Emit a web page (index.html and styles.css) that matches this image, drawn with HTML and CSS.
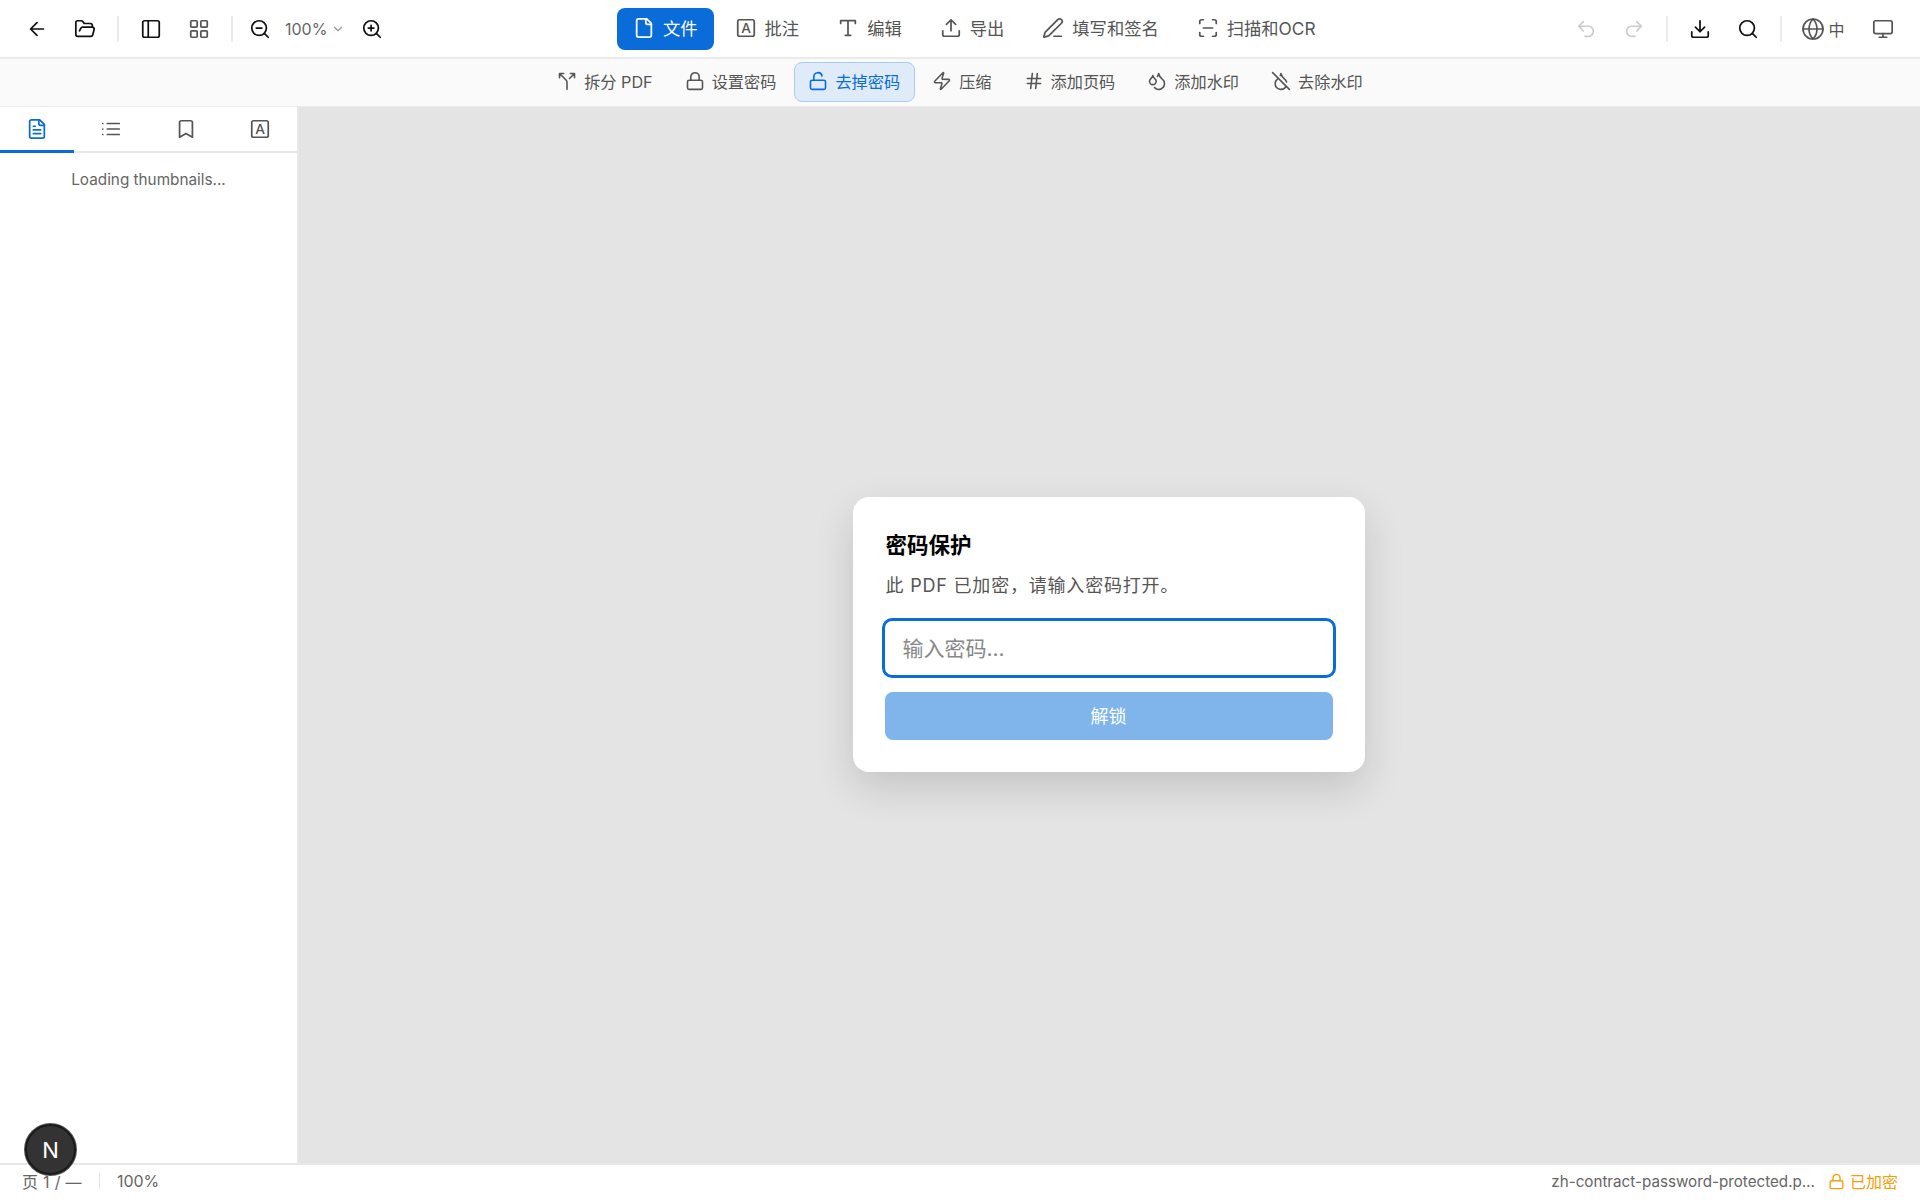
FILE: index.html
```html
<!DOCTYPE html>
<html lang="zh">
<head>
<meta charset="utf-8">
<title>PDF</title>
<link rel="stylesheet" href="styles.css">
</head>
<body>
<div class="app">
  <header class="topbar">
    <div class="group left">
      <button class="ib dark"><svg class="ic" viewBox="0 0 24 24"><path d="M19 12H5M12 19l-7-7 7-7"/></svg></button>
      <button class="ib dark"><svg class="ic" viewBox="0 0 24 24"><path d="m6 14 1.5-2.9A2 2 0 0 1 9.24 10H20a2 2 0 0 1 1.94 2.5l-1.54 6a2 2 0 0 1-1.95 1.5H4a2 2 0 0 1-2-2V5a2 2 0 0 1 2-2h3.9a2 2 0 0 1 1.69.9l.81 1.2a2 2 0 0 0 1.67.9H18a2 2 0 0 1 2 2v2"/></svg></button>
      <span class="sep"></span>
      <button class="ib dark"><svg class="ic" viewBox="0 0 24 24"><rect x="3" y="3" width="18" height="18" rx="2"/><path d="M9 3v18"/></svg></button>
      <button class="ib gray"><svg class="ic" viewBox="0 0 24 24"><rect x="3" y="3" width="7" height="7" rx="1"/><rect x="14" y="3" width="7" height="7" rx="1"/><rect x="14" y="14" width="7" height="7" rx="1"/><rect x="3" y="14" width="7" height="7" rx="1"/></svg></button>
      <span class="sep"></span>
      <button class="ib dark zo"><svg class="ic" viewBox="0 0 24 24"><circle cx="11" cy="11" r="8"/><path d="m21 21-4.3-4.3M8 11h6"/></svg></button>
      <span class="zoom">100%<svg class="chev" viewBox="0 0 24 24"><path d="m6 9 6 6 6-6"/></svg></span>
      <button class="ib dark zi"><svg class="ic" viewBox="0 0 24 24"><circle cx="11" cy="11" r="8"/><path d="m21 21-4.3-4.3M11 8v6M8 11h6"/></svg></button>
    </div>
    <nav class="tabs">
      <button class="tab active"><svg class="ic" viewBox="0 0 24 24"><path d="M15 2H6a2 2 0 0 0-2 2v16a2 2 0 0 0 2 2h12a2 2 0 0 0 2-2V7Z"/><path d="M14 2v4a2 2 0 0 0 2 2h4"/></svg>文件</button>
      <button class="tab"><svg class="ic" viewBox="0 0 24 24"><rect x="3" y="3" width="18" height="18" rx="2"/><text class="ic-a" x="12" y="17">A</text></svg>批注</button>
      <button class="tab"><svg class="ic" viewBox="0 0 24 24"><path d="M4 7V4h16v3M9 20h6M12 4v16"/></svg>编辑</button>
      <button class="tab"><svg class="ic" viewBox="0 0 24 24"><path d="M21 15v4a2 2 0 0 1-2 2H5a2 2 0 0 1-2-2v-4M17 8l-5-5-5 5M12 3v12"/></svg>导出</button>
      <button class="tab"><svg class="ic" viewBox="0 0 24 24"><path d="M13 21h8"/><path d="M21.174 6.812a1 1 0 0 0-3.986-3.987L3.842 16.174a2 2 0 0 0-.5.83l-1.321 4.352a.5.5 0 0 0 .623.622l4.353-1.32a2 2 0 0 0 .83-.497z"/></svg>填写和签名</button>
      <button class="tab"><svg class="ic" viewBox="0 0 24 24"><path d="M3 7V5a2 2 0 0 1 2-2h2M17 3h2a2 2 0 0 1 2 2v2M21 17v2a2 2 0 0 1-2 2h-2M7 21H5a2 2 0 0 1-2-2v-2M7 12h10"/></svg>扫描和OCR</button>
    </nav>
    <div class="group right">
      <button class="ib faint"><svg class="ic" viewBox="0 0 24 24"><path d="M9 14 4 9l5-5"/><path d="M4 9h10.5a5.5 5.5 0 0 1 5.5 5.5a5.5 5.5 0 0 1-5.5 5.5H11"/></svg></button>
      <button class="ib faint"><svg class="ic" viewBox="0 0 24 24"><path d="m15 14 5-5-5-5"/><path d="M20 9H9.5A5.5 5.5 0 0 0 4 14.5A5.5 5.5 0 0 0 9.5 20H13"/></svg></button>
      <span class="sep"></span>
      <button class="ib dark"><svg class="ic" viewBox="0 0 24 24"><path d="M21 15v4a2 2 0 0 1-2 2H5a2 2 0 0 1-2-2v-4M7 10l5 5 5-5M12 15V3"/></svg></button>
      <button class="ib dark"><svg class="ic" viewBox="0 0 24 24"><circle cx="11" cy="11" r="8"/><path d="m21 21-4.3-4.3"/></svg></button>
      <span class="sep"></span>
      <span class="lang"><svg class="ic" viewBox="0 0 24 24"><circle cx="12" cy="12" r="10"/><path d="M12 2a14.5 14.5 0 0 0 0 20 14.5 14.5 0 0 0 0-20M2 12h20"/></svg>中</span>
      <button class="ib gray mon"><svg class="ic" viewBox="0 0 24 24"><rect x="2" y="3" width="20" height="14" rx="2"/><path d="M8 21h8M12 17v4"/></svg></button>
    </div>
  </header>

  <div class="subbar">
    <button class="sub"><svg class="ic" viewBox="0 0 24 24"><path d="M16 3h5v5M8 3H3v5M12 22v-8.3a4 4 0 0 0-1.172-2.872L3 3M15 9l6-6"/></svg>拆分 PDF</button>
    <button class="sub"><svg class="ic" viewBox="0 0 24 24"><rect x="3" y="11" width="18" height="11" rx="2"/><path d="M7 11V7a5 5 0 0 1 10 0v4"/></svg>设置密码</button>
    <button class="sub on"><svg class="ic" viewBox="0 0 24 24"><rect x="3" y="11" width="18" height="11" rx="2"/><path d="M7 11V7a5 5 0 0 1 9.9-1"/></svg>去掉密码</button>
    <button class="sub"><svg class="ic" viewBox="0 0 24 24"><path d="M4 14a1 1 0 0 1-.78-1.63l9.9-10.2a.5.5 0 0 1 .86.46l-1.92 6.02A1 1 0 0 0 13 10h7a1 1 0 0 1 .78 1.63l-9.9 10.2a.5.5 0 0 1-.86-.46l1.92-6.02A1 1 0 0 0 11 14z"/></svg>压缩</button>
    <button class="sub"><svg class="ic" viewBox="0 0 24 24"><path d="M4 9h16M4 15h16M10 3 8 21M16 3l-2 18"/></svg>添加页码</button>
    <button class="sub"><svg class="ic" viewBox="0 0 24 24"><path d="M7 16.3c2.2 0 4-1.83 4-4.05 0-1.16-.57-2.26-1.71-3.19S7.29 6.75 7 5.3c-.29 1.45-1.14 2.84-2.29 3.76S3 11.1 3 12.25c0 2.22 1.8 4.05 4 4.05z"/><path d="M12.56 6.6A10.97 10.97 0 0 0 14 3.02c.5 2.5 2 4.9 4 6.5s3 3.5 3 5.5a6.98 6.98 0 0 1-11.91 4.97"/></svg>添加水印</button>
    <button class="sub"><svg class="ic" viewBox="0 0 24 24"><path d="M18.715 13.186C18.29 11.858 17.384 10.607 16 9.5c-2-1.6-3.5-4-4-6.5a10.7 10.7 0 0 1-.884 2.586M2 2l20 20M8.795 8.797A11 11 0 0 1 8 9.5C6 11.1 5 13 5 15a7 7 0 0 0 13.222 3.208"/></svg>去除水印</button>
  </div>

  <div class="main">
    <aside class="side">
      <div class="stabs">
        <button class="stab on"><svg class="ic" viewBox="0 0 24 24"><path d="M15 2H6a2 2 0 0 0-2 2v16a2 2 0 0 0 2 2h12a2 2 0 0 0 2-2V7Z"/><path d="M14 2v4a2 2 0 0 0 2 2h4M10 9H8M16 13H8M16 17H8"/></svg></button>
        <button class="stab"><svg class="ic" viewBox="0 0 24 24"><path d="M3 12h.01M3 18h.01M3 6h.01M8 12h13M8 18h13M8 6h13"/></svg></button>
        <button class="stab"><svg class="ic" viewBox="0 0 24 24"><path d="m19 21-7-4-7 4V5a2 2 0 0 1 2-2h10a2 2 0 0 1 2 2v16z"/></svg></button>
        <button class="stab"><svg class="ic" viewBox="0 0 24 24"><rect x="3" y="3" width="18" height="18" rx="2"/><text class="ic-a" x="12" y="17">A</text></svg></button>
      </div>
      <p class="loading">Loading thumbnails...</p>
    </aside>
    <main class="canvas">
      <form class="dialog">
        <h2>密码保护</h2>
        <p>此 PDF 已加密，请输入密码打开。</p>
        <input class="pw" type="password" placeholder="输入密码...">
        <button class="unlock" type="button">解锁</button>
      </form>
    </main>
  </div>

  <footer class="status">
    <span class="pg">页 1 / —</span>
    <span class="ssep"></span>
    <span>100%</span>
    <span class="fname">zh-contract-password-protected.p…</span>
    <span class="enc"><svg class="ic" viewBox="0 0 24 24"><rect x="3" y="11" width="18" height="11" rx="2"/><path d="M7 11V7a5 5 0 0 1 10 0v4"/></svg>已加密</span>
  </footer>
  <div class="next">N</div>
</div>
</body>
</html>
```
FILE: styles.css
```css
* { box-sizing: border-box; }
html, body { margin: 0; height: 100%; }
body {
  font-family: Inter, "Noto Sans CJK SC", sans-serif;
  color: #555;
  background: #fff;
}
button { font: inherit; color: inherit; background: none; border: 0; padding: 0; }
.app { position: relative; height: 1200px; display: flex; flex-direction: column; overflow: hidden; }
.ic { width: 22px; height: 22px; fill: none; stroke: currentColor; stroke-width: 1.9; stroke-linecap: round; stroke-linejoin: round; flex: none; display: block; }
.ic-a { font: 500 15px Inter, sans-serif; fill: currentColor; stroke: none; text-anchor: middle; }

.topbar { height: 59px; flex: none; display: flex; align-items: center; border-bottom: 2px solid #ebebeb; }
.group { display: flex; align-items: center; }
.left { width: 617px; padding-left: 13px; flex: none; }
.right { margin-left: auto; padding-right: 13px; }
.ib { width: 38px; height: 38px; display: flex; align-items: center; justify-content: center; margin: 0 5px; }
.dark { color: #111; }
.gray { color: #555; }
.faint { color: #ccc; }
.sep { width: 2px; height: 26px; background: #ebebeb; margin: 0 8px; flex: none; }
.zo { margin-right: 0; margin-left: 0; }
.zoom { font-size: 16px; color: #666; display: flex; align-items: center; width: 68px; padding-left: 6px; }
.chev { width: 14px; height: 14px; margin-left: 4px; fill: none; stroke: #999; stroke-width: 2; stroke-linecap: round; stroke-linejoin: round; }
.zi { margin-left: 6px; }
.tabs { display: flex; align-items: center; gap: 4px; }
.tab { height: 42px; display: flex; align-items: center; gap: 8px; padding: 0 17px 2px; font-size: 17.3px; border-radius: 8px; color: #555; }
.tab.active { background: #0a6cd8; color: #fff; padding: 0 16px 2px; }
.lang { display: flex; align-items: center; gap: 3.5px; font-size: 16px; margin-left: 11px; width: 61px; color: #555; }
.lang .ic { width: 24px; height: 24px; stroke-width: 1.7; }
.mon { margin-left: 2px; }

.subbar { height: 47px; flex: none; display: flex; align-items: center; justify-content: center; gap: 3px; padding-bottom: 2px; background: #fafafa; }
.sub { height: 40px; display: flex; align-items: center; gap: 7px; padding: 0 13.5px 2px; font-size: 16.2px; border-radius: 8px; color: #555; border: 1px solid transparent; }
.sub .ic { width: 20px; height: 20px; }
.sub.on { background: #dfebf8; border-color: #a9cdf2; color: #0a6cd8; }

.main { flex: 1; display: flex; min-height: 0; }
.side { width: 299px; flex: none; background: #fff; border-right: 2px solid #e8e8e8; border-top: 1px solid #ebebeb; }
.stabs { display: flex; height: 46px; border-bottom: 2px solid #e8e8e8; }
.stab { flex: 1; display: flex; align-items: center; justify-content: center; color: #555; position: relative; }
.stab.on { color: #0a6cd8; }
.stab.on::after { content: ""; position: absolute; left: 0; right: 0; bottom: -2px; height: 3px; background: #0a6cd8; }
.loading { margin: 17px 0 0; text-align: center; font-size: 15.3px; color: #666; line-height: 20px; }
.canvas { flex: 1; background: #e4e4e4; display: flex; justify-content: center; padding: 390px 2px 0 0; border-top: 1px solid #ebebeb; }
.dialog { width: 512px; height: 275px; background: #fff; border-radius: 16px; padding: 32px; box-shadow: 0 16px 40px rgba(0,0,0,.14); display: flex; flex-direction: column; }
.dialog h2 { margin: 1px 0 0 1px; font-size: 21.5px; font-weight: 700; color: #000; line-height: 30px; }
.dialog p { margin: 12px 0 0 1px; font-size: 18px; letter-spacing: .8px; color: #555; line-height: 27px; white-space: nowrap; }
.pw { margin: 19px 0 0 -3px; width: 454px; height: 60px; flex: none; border: 3px solid #0a6cd8; border-radius: 10px; padding: 0 18px; font: 21px Inter, "Noto Sans CJK SC", sans-serif; outline: 0; background: #fff; }
.pw::placeholder { color: #888; }
.unlock { margin-top: 14px; height: 48px; flex: none; border-radius: 8px; background: #7fb5ea; color: #fff; font-size: 18px; padding-bottom: 3px; }

.status { height: 37px; flex: none; display: flex; align-items: center; padding: 0 22px 3px; font-size: 16px; color: #666; border-top: 2px solid #e8e8e8; }
.pg { letter-spacing: .3px; }
.ssep { width: 1px; height: 16px; background: #e3e3e3; margin: 0 17px; }
.fname { margin-left: auto; font-size: 15.2px; white-space: nowrap; }
.enc { display: flex; align-items: center; gap: 5px; color: #f59e0b; margin-left: 13px; font-size: 16px; }
.enc .ic { width: 17px; height: 17px; }
.next { position: absolute; left: 25px; top: 1124px; width: 51px; height: 51px; border-radius: 50%; background: #333; border: 2px solid #1a1a1a; box-shadow: 0 0 0 1px #555; color: #fff; display: flex; align-items: center; justify-content: center; font: 400 22px Inter, sans-serif; }
```
